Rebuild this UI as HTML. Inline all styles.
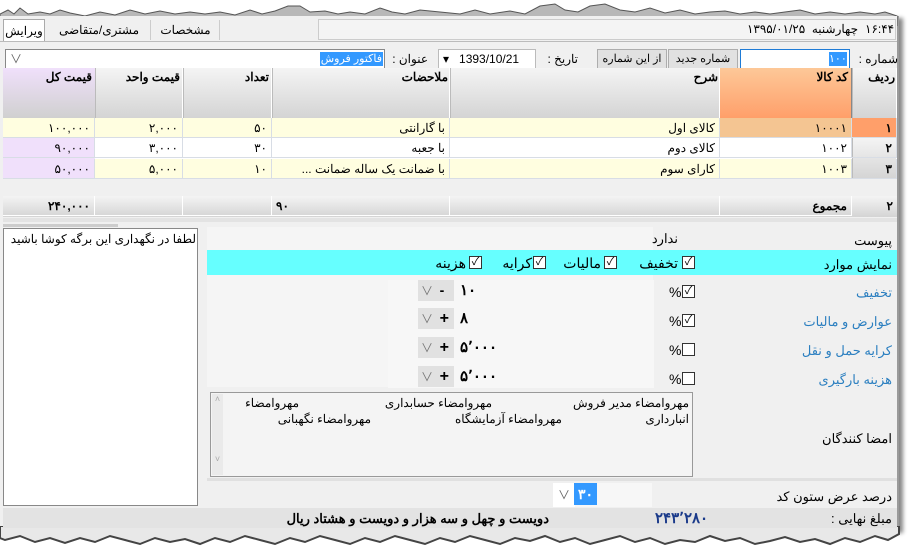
<!DOCTYPE html>
<html><head><meta charset="utf-8"><style>
*{box-sizing:border-box;margin:0;padding:0}
body{width:908px;height:558px;overflow:hidden;background:#fff;font-family:"Liberation Sans","Noto Sans CJK SC",sans-serif;font-size:12px;color:#000;position:relative}
.a{position:absolute;white-space:nowrap}
.r{direction:rtl;text-align:right}
.hd{background:linear-gradient(#f4f4f4,#d4d4d4);border-right:1px solid #fff;border-left:1px solid #bbb}
.cell{position:absolute;height:20px;line-height:20px;padding:0 4px;direction:rtl;text-align:right;border-right:1px solid #d8dde5;border-bottom:1px solid #d8dde5}
.cb{position:absolute;width:13px;height:13px;border:1px solid #333;background:#fff;font-size:11px;line-height:11px;text-align:center}
.lbl{color:#2b7fc0}
.big{font-weight:bold;font-size:15px}
</style></head><body>
<div class="a" style="left:0;top:16px;width:899px;height:515px;background:#f0f0f0;border-right:2px solid #9a9a9a;box-shadow:4px 2px 4px #888"></div>
<svg class="a" style="left:0;top:0" width="908" height="26"><path d="M0 26 L0 14 L8 10 L14 14 L20 8 L28 14 L40 12 L50 14 L60 10 L70 13 L85 16 L100 12 L115 15 L130 10 L145 14 L160 11 L175 14 L190 12 L205 14 L220 12 L235 15 L250 10 L262 14 L275 11 L288 6 L300 6 L310 12 L325 11 L338 14 L350 12 L365 14 L380 8 L392 12 L405 14 L420 10 L440 12 L460 14 L475 10 L490 14 L510 11 L525 14 L540 6 L555 4 L565 10 L578 12 L590 6 L605 4 L620 10 L635 12 L650 8 L665 13 L680 10 L695 14 L710 12 L725 11 L740 14 L755 12 L770 14 L785 12 L800 10 L815 14 L830 12 L845 14 L860 12 L875 14 L885 12 L897 16 L897 26 Z" fill="#b8b8b8" stroke="#555" stroke-width="1"/><rect x="0" y="16" width="897" height="10" fill="#f0f0f0"/></svg>
<svg class="a" style="left:0;top:526px" width="908" height="32"><path d="M0 0 L899 0 L899 8 L888 14 L875 10 L860 16 L845 12 L830 18 L815 13 L800 16 L785 11 L770 15 L755 18 L740 12 L725 15 L710 10 L695 16 L680 14 L665 18 L650 12 L635 16 L620 10 L605 14 L590 18 L575 12 L560 16 L545 10 L530 15 L515 12 L500 18 L485 14 L470 10 L455 16 L440 12 L425 18 L410 14 L395 10 L380 16 L365 12 L350 18 L335 14 L320 10 L305 16 L290 12 L275 18 L260 14 L245 10 L230 16 L215 12 L200 18 L185 13 L170 16 L155 12 L140 18 L125 14 L110 10 L95 16 L80 12 L65 17 L50 12 L35 16 L20 10 L5 14 L0 12 Z" fill="#e8e8e8" stroke="#444" stroke-width="2"/></svg>
<div class="a" style="left:3px;top:19px;width:42px;height:22px;background:#fff;border:1px solid #aaa;border-bottom:none;line-height:22px;text-align:center">ويرايش</div>
<div class="a" style="left:48px;top:20px;width:103px;height:20px;line-height:20px;text-align:center;border-right:1px solid #ccc">مشتری/متقاضی</div>
<div class="a" style="left:152px;top:20px;width:68px;height:20px;line-height:20px;text-align:center;border-right:1px solid #ccc">مشخصات</div>
<div class="a" style="left:318px;top:19px;width:578px;height:21px;border:1px solid #ccc;background:#f4f4f4"></div>
<div class="a r" style="right:50px;top:21px;line-height:16px">چهارشنبه &nbsp;۱۳۹۵/۰۱/۲۵</div>
<div class="a" style="left:865px;top:21px;line-height:16px">۱۶:۴۴</div>
<div class="a" style="left:0;top:41px;width:897px;height:1px;background:#bbb"></div>
<div class="a r" style="right:10px;top:51px;line-height:16px">شماره :</div>
<div class="a" style="left:740px;top:49px;width:110px;height:20px;border:1px solid #1e7bd6;background:#fff"></div>
<div class="a" style="left:829px;top:52px;width:18px;height:14px;background:#3399ff;color:#fff;line-height:14px;font-size:11px">۱۰۰</div>
<div class="a" style="left:668px;top:49px;width:70px;height:20px;border:1px solid #adadad;background:#e1e1e1;line-height:18px;text-align:center;font-size:11px">شماره جدید</div>
<div class="a" style="left:597px;top:49px;width:70px;height:20px;border:1px solid #adadad;background:#e1e1e1;line-height:18px;text-align:center;font-size:11px">از این شماره</div>
<div class="a r" style="right:330px;top:51px;line-height:16px">تاريخ :</div>
<div class="a" style="left:438px;top:49px;width:98px;height:20px;border:1px solid #bbb;background:#fff;line-height:18px;padding-left:4px">▾ &nbsp; 1393/10/21</div>
<div class="a r" style="right:480px;top:51px;line-height:16px">عنوان :</div>
<div class="a" style="left:5px;top:49px;width:380px;height:20px;border:1px solid #888;background:#fff;line-height:18px;padding-left:4px;color:#666">∨</div>
<div class="a r" style="right:525px;top:52px;height:14px;padding:0 1px;background:#3399ff;color:#fff;font-size:11px;line-height:14px">فاکتور فروش</div>
<div class="a" style="left:3px;top:68px;width:894px;height:50px;background:#e0e0e0"></div>
<div class="a hd" style="left:852px;top:68px;width:45px;height:50px"></div>
<div class="a" style="left:720px;top:68px;width:132px;height:50px;background:linear-gradient(#fdc898,#ff9f6a);border-right:1px solid #888"></div>
<div class="a hd" style="left:450px;top:68px;width:270px;height:50px"></div>
<div class="a hd" style="left:272px;top:68px;width:178px;height:50px"></div>
<div class="a hd" style="left:183px;top:68px;width:89px;height:50px"></div>
<div class="a hd" style="left:95px;top:68px;width:88px;height:50px"></div>
<div class="a" style="left:3px;top:68px;width:92px;height:50px;background:linear-gradient(#f0e0fb,#d0d0d0)"></div>
<div class="a" style="right:13px;top:70px;font-weight:bold">رديف</div>
<div class="a" style="right:60px;top:70px;font-weight:bold">کد کالا</div>
<div class="a" style="right:190px;top:70px;font-weight:bold">شرح</div>
<div class="a" style="right:460px;top:70px;font-weight:bold">ملاحضات</div>
<div class="a" style="right:639px;top:70px;font-weight:bold">تعداد</div>
<div class="a" style="right:728px;top:70px;font-weight:bold">قیمت واحد</div>
<div class="a" style="right:816px;top:70px;font-weight:bold">قیمت کل</div>
<div class="a" style="left:3px;top:118px;width:894px;height:61px;background:#fffee0"></div>
<div class="a" style="left:3px;top:138px;width:894px;height:21px;background:#fff"></div>
<div class="a" style="left:852px;top:118px;width:45px;height:20px;background:#ff9f6a"></div>
<div class="a hd" style="left:852px;top:138px;width:45px;height:41px"></div>
<div class="a" style="left:720px;top:118px;width:132px;height:20px;background:#f4c592"></div>
<div class="a" style="left:3px;top:138px;width:92px;height:41px;background:#f0e0fb"></div>
<div class="cell" style="left:852px;top:118px;width:45px;font-weight:bold">١</div>
<div class="cell" style="left:852px;top:138px;width:45px;font-weight:bold">۲</div>
<div class="cell" style="left:852px;top:159px;width:45px;font-weight:bold">۳</div>
<div class="cell" style="left:720px;top:118px;width:132px">۱۰۰۰۱</div>
<div class="cell" style="left:720px;top:138px;width:132px">۱۰۰۲</div>
<div class="cell" style="left:720px;top:159px;width:132px">۱۰۰۳</div>
<div class="cell" style="left:450px;top:118px;width:270px">کالای اول</div>
<div class="cell" style="left:450px;top:138px;width:270px">کالای دوم</div>
<div class="cell" style="left:450px;top:159px;width:270px">کارای سوم</div>
<div class="cell" style="left:272px;top:118px;width:178px">با گارانتی</div>
<div class="cell" style="left:272px;top:138px;width:178px">با جعبه</div>
<div class="cell" style="left:272px;top:159px;width:178px">با ضمانت یک ساله ضمانت ...</div>
<div class="cell" style="left:183px;top:118px;width:89px">۵۰</div>
<div class="cell" style="left:183px;top:138px;width:89px">۳۰</div>
<div class="cell" style="left:183px;top:159px;width:89px">۱۰</div>
<div class="cell" style="left:95px;top:118px;width:88px">۲,۰۰۰</div>
<div class="cell" style="left:95px;top:138px;width:88px">۳,۰۰۰</div>
<div class="cell" style="left:95px;top:159px;width:88px">۵,۰۰۰</div>
<div class="cell" style="left:3px;top:118px;width:92px">۱۰۰,۰۰۰</div>
<div class="cell" style="left:3px;top:138px;width:92px">۹۰,۰۰۰</div>
<div class="cell" style="left:3px;top:159px;width:92px">۵۰,۰۰۰</div>
<div class="a" style="left:3px;top:196px;width:894px;height:21px;background:linear-gradient(#f4f4f4,#d4d4d4)"></div>
<div class="cell" style="left:852px;top:196px;width:45px;font-weight:bold;border:none">۲</div>
<div class="cell" style="left:720px;top:196px;width:132px;font-weight:bold;border-color:#fff">مجموع</div>
<div class="cell" style="left:450px;top:196px;width:270px;border-color:#fff"></div>
<div class="cell" style="left:272px;top:196px;width:178px;border-color:#fff;font-weight:bold;text-align:left">۹۰</div>
<div class="cell" style="left:183px;top:196px;width:89px;border-color:#fff"></div>
<div class="cell" style="left:95px;top:196px;width:88px;border-color:#fff"></div>
<div class="cell" style="left:3px;top:196px;width:92px;border-color:#fff;font-weight:bold">۲۴۰,۰۰۰</div>
<div class="a" style="left:3px;top:218px;width:894px;height:4px;background:#e3e3e3"></div>
<div class="a" style="left:3px;top:224px;width:115px;height:3px;background:#ccc"></div>
<div class="a" style="left:3px;top:228px;width:195px;height:278px;background:#fff;border:1px solid #888"></div>
<div class="a r" style="right:712px;top:232px">لطفا در نگهداری این برگه کوشا باشید</div>
<div class="a" style="left:207px;top:227px;width:690px;height:280px;background:#f0f0f0"></div>
<div class="a" style="left:207px;top:227px;width:446px;height:160px;background:#f5f5f5"></div>
<div class="a r" style="right:16px;top:233px;font-size:13px">پیوست</div>
<div class="a r" style="right:230px;top:231px;font-size:13px">ندارد</div>
<div class="a" style="left:207px;top:250px;width:690px;height:25px;background:#66ffff"></div>
<div class="a r" style="right:16px;top:257px;font-size:13px">نمایش موارد</div>
<div class="a r" style="right:230px;top:255px;font-size:14px">تخفیف</div><div class="cb" style="left:682px;top:256px">✓</div>
<div class="a r" style="right:307px;top:255px;font-size:14px">مالیات</div><div class="cb" style="left:604px;top:256px">✓</div>
<div class="a r" style="right:376px;top:255px;font-size:14px">کرایه</div><div class="cb" style="left:533px;top:256px">✓</div>
<div class="a r" style="right:442px;top:255px;font-size:14px">هزینه</div><div class="cb" style="left:469px;top:256px">✓</div>
<div class="a r lbl" style="right:16px;top:285px;font-size:13px">تخفیف</div>
<div class="a r lbl" style="right:16px;top:314px;font-size:13px">عوارض و مالیات</div>
<div class="a r lbl" style="right:16px;top:343px;font-size:13px">کرایه حمل و نقل</div>
<div class="a r lbl" style="right:16px;top:372px;font-size:13px">هزینه بارگیری</div>
<div class="a" style="left:669px;top:284px;font-size:14px">%</div><div class="cb" style="left:682px;top:285px">✓</div>
<div class="a" style="left:669px;top:313px;font-size:14px">%</div><div class="cb" style="left:682px;top:314px">✓</div>
<div class="a" style="left:669px;top:342px;font-size:14px">%</div><div class="cb" style="left:682px;top:343px"></div>
<div class="a" style="left:669px;top:371px;font-size:14px">%</div><div class="cb" style="left:682px;top:372px"></div>
<div class="a" style="left:388px;top:280px;width:266px;height:108px;background:#f7f7f7"></div>
<div class="a" style="left:418px;top:280px;width:36px;height:21px;background:#e1e1e1"></div>
<div class="a" style="left:418px;top:308px;width:36px;height:21px;background:#e1e1e1"></div>
<div class="a" style="left:418px;top:337px;width:36px;height:21px;background:#e1e1e1"></div>
<div class="a" style="left:418px;top:366px;width:36px;height:21px;background:#e1e1e1"></div>
<div class="a" style="left:421px;top:282px;color:#777">∨ &nbsp;<b style="color:#000;font-size:14px">-</b></div>
<div class="a" style="left:421px;top:310px;color:#777">∨ &nbsp;<b style="color:#000;font-size:16px">+</b></div>
<div class="a" style="left:421px;top:339px;color:#777">∨ &nbsp;<b style="color:#000;font-size:16px">+</b></div>
<div class="a" style="left:421px;top:368px;color:#777">∨ &nbsp;<b style="color:#000;font-size:16px">+</b></div>
<div class="a big" style="left:460px;top:281px">۱۰</div>
<div class="a big" style="left:460px;top:309px">۸</div>
<div class="a big" style="left:460px;top:338px">۵٬۰۰۰</div>
<div class="a big" style="left:460px;top:367px">۵٬۰۰۰</div>
<div class="a" style="left:210px;top:392px;width:483px;height:85px;border:1px solid #999;background:#f4f4f4"></div>
<div class="a" style="left:212px;top:394px;width:11px;height:81px;background:#eaeaea;color:#aaa;font-size:9px;text-align:center">˄<br><br><br><br><br><br>˅</div>
<div class="a r" style="right:219px;top:396px">مهروامضاء مدیر فروش</div>
<div class="a r" style="right:416px;top:396px">مهروامضاء حسابداری</div>
<div class="a r" style="right:609px;top:396px">مهروامضاء</div>
<div class="a r" style="right:219px;top:412px">انبارداری</div>
<div class="a r" style="right:346px;top:412px">مهروامضاء آزمایشگاه</div>
<div class="a r" style="right:537px;top:412px">مهروامضاء نگهبانی</div>
<div class="a r" style="right:16px;top:431px;font-size:13px">امضا کنندگان</div>
<div class="a" style="left:207px;top:478px;width:690px;height:3px;background:#e0e0e0"></div>
<div class="a r" style="right:16px;top:489px;font-size:13px">درصد عرض ستون کد</div>
<div class="a" style="left:553px;top:483px;width:99px;height:24px;background:#f7f7f7"></div>
<div class="a" style="left:553px;top:483px;width:22px;height:24px;background:#fff;color:#666;line-height:24px;text-align:center">∨</div>
<div class="a" style="left:574px;top:483px;width:23px;height:22px;background:#3399ff;color:#fff;font-weight:bold;font-size:14px;line-height:22px;text-align:center">۳۰</div>
<div class="a" style="left:3px;top:508px;width:894px;height:20px;background:#e3e3e3"></div>
<div class="a r" style="right:16px;top:511px;font-size:13px">مبلغ نهایی :</div>
<div class="a big" style="left:655px;top:509px;color:#1a3a8a;letter-spacing:1px">۲۴۳٬۲۸۰</div>
<div class="a r" style="right:359px;top:511px;font-weight:bold;font-size:13px">دویست و چهل و سه هزار و دویست و هشتاد ریال</div>
</body></html>
